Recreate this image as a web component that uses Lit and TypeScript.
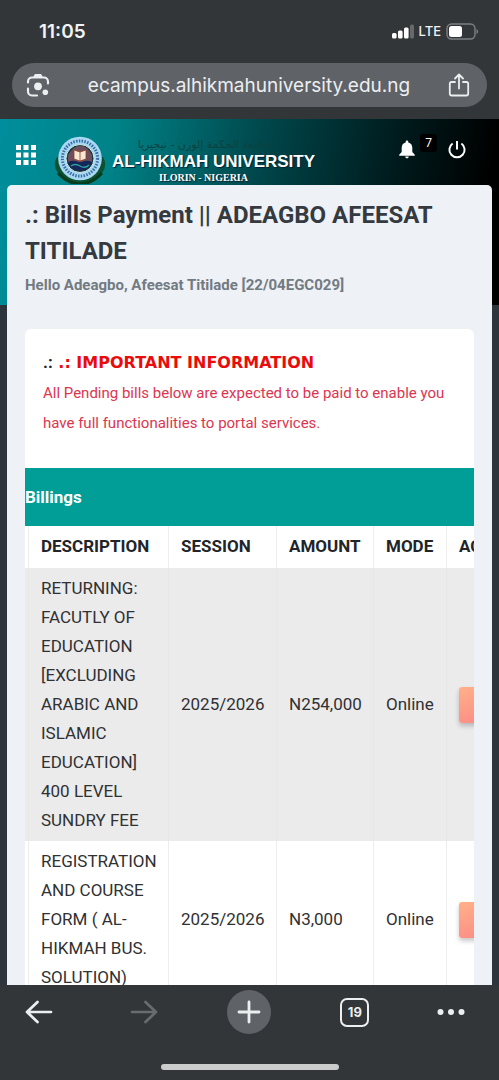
import { LitElement, html, css, svg } from "lit";
import { customElement } from "lit/decorators.js";

interface Bill {
  description: string;
  session: string;
  amount: string;
  mode: string;
}

const BILLS: Bill[] = [
  {
    description: "RETURNING: FACUTLY OF EDUCATION [EXCLUDING ARABIC AND ISLAMIC EDUCATION] 400 LEVEL SUNDRY FEE",
    session: "2025/2026",
    amount: "N254,000",
    mode: "Online",
  },
  {
    description: "REGISTRATION AND COURSE FORM ( AL-HIKMAH BUS. SOLUTION)",
    session: "2025/2026",
    amount: "N3,000",
    mode: "Online",
  },
];

@customElement("browser-top")
class BrowserTop extends LitElement {
  static styles = css`
    :host {
      display: block;
      flex: none;
      background: #333638;
      color: #f1f3f4;
      font-family: Inter, sans-serif;
    }
    .status {
      display: flex;
      align-items: center;
      height: 62px;
      padding: 0 20px 0 39px;
      box-sizing: border-box;
    }
    .time {
      flex: 1;
      font-size: 19px;
      font-weight: 600;
    }
    .signal,
    .battery {
      display: block;
    }
    .lte {
      margin: 0 5px;
      font-size: 13px;
      font-weight: 500;
    }
    .bar {
      display: flex;
      align-items: center;
      height: 44px;
      margin: 1px 12px 12px;
      padding: 0 14px;
      border-radius: 22px;
      background: #5f6267;
    }
    .icon {
      display: block;
      flex: none;
      padding: 0;
      border: 0;
      background: none;
      color: #eceef0;
    }
    .icon svg {
      display: block;
    }
    .share {
      margin-right: 3px;
    }
    .url {
      flex: 1;
      min-width: 0;
      padding: 0;
      border: 0;
      outline: 0;
      background: none;
      color: #eceef0;
      text-align: center;
      font-family: Inter, sans-serif;
      font-size: 19px;
    }
  `;

  render() {
    return html`
      <div class="status">
        <span class="time">11:05</span>
        <svg class="signal" width="22" height="15" viewBox="0 0 22 15" fill="#fff">
          <rect x="0" y="9" width="4.600" height="5.500" rx="1.500" />
          <rect x="6" y="6.500" width="4.600" height="8" rx="1.500" />
          <rect x="12" y="3.500" width="4.600" height="11" rx="1.500" />
          <rect x="18" y="0.500" width="4" height="14" rx="1.500" opacity=".25" />
        </svg>
        <span class="lte">LTE</span>
        <svg class="battery" width="33" height="17" viewBox="0 0 33 17">
          <rect x="1" y="1" width="28" height="15" rx="4.5" fill="none" stroke="#7d8082" stroke-width="1.4" />
          <rect x="3" y="3" width="13" height="11" rx="2.5" fill="#fff" />
          <path d="M30.5 6v5c1-.4 1.6-1.300 1.600-2.500s-.6-2.100-1.600-2.500z" fill="#7d8082" />
        </svg>
      </div>
      <div class="bar">
        <button class="icon" aria-label="Search with camera">
          <svg width="24" height="24" viewBox="0 0 24 24" fill="none" stroke="currentColor" stroke-width="2.200" stroke-linecap="round">
            <path d="M2 9.500V8.500A4 4 0 0 1 6 4.500H18A4 4 0 0 1 22 8.500V10.500" />
            <path d="M2 15.500V18.500A4 4 0 0 0 6 22.500H11" />
            <path d="M7 4.500 8.500 1.600Q8.800 1 9.500 1H14.500Q15.200 1 15.500 1.600L17 4.500z" fill="currentColor" stroke="none" />
            <circle cx="12" cy="13.300" r="3.900" fill="currentColor" stroke="none" />
            <circle cx="19.300" cy="19.300" r="2.800" fill="currentColor" stroke="none" />
          </svg>
        </button>
        <input class="url" aria-label="Address" value="ecampus.alhikmahuniversity.edu.ng" />
        <button class="icon share" aria-label="Share">
          <svg width="22" height="24" viewBox="0 0 22 24" fill="none" stroke="currentColor" stroke-width="1.800" stroke-linecap="round" stroke-linejoin="round">
            <path d="M7 9H3.500A1.700 1.700 0 0 0 1.800 10.700V20.800A1.700 1.700 0 0 0 3.500 22.500H18.500A1.700 1.700 0 0 0 20.200 20.800V10.700A1.700 1.700 0 0 0 18.500 9H15" />
            <path d="M11 15.500V2M7 5.500 11 1.500 15 5.500" />
          </svg>
        </button>
      </div>
    `;
  }
}

@customElement("site-header")
class SiteHeader extends LitElement {
  static styles = css`
    :host {
      display: flex;
      align-items: flex-start;
      padding: 8px 33px 0 16px;
      height: 58px;
      color: #fff;
    }
    .icon {
      display: block;
      flex: none;
      padding: 0;
      border: 0;
      background: none;
      color: #fff;
    }
    .icon svg,
    .crest {
      display: block;
    }
    .menu {
      margin-top: 18px;
    }
    .brand {
      display: flex;
      flex: 1;
      margin-left: 16px;
      color: #fff;
      text-decoration: none;
    }
    .words {
      display: flex;
      flex-direction: column;
      align-items: center;
      margin-left: 2px;
      white-space: nowrap;
    }
    .arabic,
    .place {
      padding-right: 20px;
    }
    .arabic {
      height: 26px;
      color: #0b4340;
      font-family: "DejaVu Sans", sans-serif;
      font-size: 11px;
      line-height: 36px;
    }
    .name {
      font-family: "Liberation Sans", sans-serif;
      font-size: 17px;
      font-weight: 700;
      line-height: 18px;
      text-shadow: 1px 1px 1px #023;
    }
    .place {
      font-family: "Liberation Serif", serif;
      font-size: 10px;
      font-weight: 700;
      line-height: 14px;
      text-shadow: 1px 1px 1px #023;
    }
    .bell {
      margin-top: 13px;
    }
    .badge {
      margin: 7px 11px 0 5px;
      padding: 0 5px;
      border-radius: 3px;
      background: #000;
      font-family: Roboto, sans-serif;
      font-size: 12px;
      line-height: 18px;
    }
    .power {
      margin-top: 13px;
    }
  `;

  private crest() {
    return svg`
      <path d="M9 22Q4 30 10 38Q18 49 32 50Q46 49 54 38Q60 30 55 22z" fill="#0b5132" />
      <path d="M10 38Q20 49 32 49Q44 49 54 38" fill="none" stroke="#063d1f" stroke-width="3" />
      <circle cx="32" cy="23.500" r="21.800" fill="#a9d8f2" />
      <circle cx="32" cy="23.500" r="17.600" fill="none" stroke="#3a6da6" stroke-width="3" stroke-dasharray="1.500 1.300" />
      <circle cx="32" cy="23.500" r="14" fill="#18343f" stroke="#d5efe8" stroke-width="1" />
      <path d="M20 20Q26 10 32 11Q39 10 44 20V27H20z" fill="#6b4f5c" />
      <path d="M26 15 32 17 38 15V24L32 26 26 24z" fill="#f6ead4" stroke="#9b3d2c" stroke-width=".8" />
      <path d="M32 17V26" stroke="#9b3d2c" stroke-width=".8" />
      <path d="M20 27Q26 24 32 28Q38 24 44 27Q42 35 32 36Q22 35 20 27z" fill="#15275a" />
      <path d="M23 31Q27 28 32 31T41 30" fill="none" stroke="#2fa5a0" stroke-width="1.400" />
    `;
  }

  render() {
    return html`
      <button class="icon menu" aria-label="Menu">
        <svg width="20" height="20" viewBox="0 0 20 20" fill="currentColor">
          ${[0, 7.5, 15].map((y) => [0, 7.5, 15].map((x) => svg`<rect x=${x} y=${y} width="5" height="5" />`))}
        </svg>
      </button>
      <a class="brand" href="#" aria-label="Al-Hikmah University home">
        <svg class="crest" width="58" height="57" viewBox="4 -8 58 57">${this.crest()}</svg>
        <span class="words">
          <span class="arabic" lang="ar">جامعة الحكمة إلورن - نيجيريا</span>
          <span class="name">AL-HIKMAH UNIVERSITY</span>
          <span class="place">ILORIN - NIGERIA</span>
        </span>
      </a>
      <button class="icon bell" aria-label="Notifications">
        <svg width="16" height="19" viewBox="0 0 16 19" fill="currentColor">
          <path d="M8 .4C8.800.4 9.300 1 9.300 1.700V2.400C11.900 3 13.300 5 13.300 7.700V12L15.800 14.800V15.700H.2V14.800L2.700 12V7.700C2.700 5 4.100 3 6.700 2.400V1.700C6.700 1 7.200.4 8 .4zM6.200 16.600H9.800A1.800 1.800 0 0 1 6.200 16.600z" />
        </svg>
      </button>
      <span class="badge">7</span>
      <button class="icon power" aria-label="Log out">
        <svg width="18" height="19" viewBox="0 0 18 19" fill="none" stroke="currentColor" stroke-width="2">
          <path d="M9 1V9.500M4.600 3.500A7.600 7.600 0 1 0 13.400 3.500" />
        </svg>
      </button>
    `;
  }
}

@customElement("bills-table")
class BillsTable extends LitElement {
  static styles = css`
    :host {
      display: block;
      overflow: hidden;
      color: #2f3133;
      font-family: Roboto, sans-serif;
      font-size: 17px;
      line-height: 29px;
    }
    .bills {
      width: 540px;
      border-collapse: separate;
      border-spacing: 0;
      table-layout: fixed;
    }
    .edge { width: 3px; }
    .description { width: 140px; }
    .session { width: 108px; }
    .amount { width: 97px; }
    .mode { width: 73px; }
    .head,
    .cell {
      padding: 6px 12px;
      border-left: 1px solid #ededee;
      text-align: left;
      vertical-align: middle;
      white-space: nowrap;
    }
    .head {
      padding-bottom: 7px;
      color: #212529;
      font-weight: 700;
    }
    .wrap {
      padding-right: 10px;
      white-space: normal;
    }
    .blank {
      padding: 0;
      border: 0;
    }
    .row:nth-child(odd) {
      background: #ebebeb;
    }
    .row:nth-child(odd) .cell {
      border-color: #e6e7e7;
    }
    .pay {
      display: block;
      width: 90px;
      height: 36px;
      padding: 0;
      border: 0;
      border-radius: 3px;
      background: linear-gradient(165deg, #ffb088, #fb7f86);
      box-shadow: 0 3px 5px rgb(0 0 0 / 22%);
    }
  `;

  render() {
    return html`
      <table class="bills">
        <colgroup>
          <col class="edge" /><col class="description" /><col class="session" />
          <col class="amount" /><col class="mode" /><col />
        </colgroup>
        <thead>
          <tr>
            <td class="blank"></td>
            ${["DESCRIPTION", "SESSION", "AMOUNT", "MODE", "ACTION"].map(
              (title) => html`<th class="head" scope="col">${title}</th>`,
            )}
          </tr>
        </thead>
        <tbody>
          ${BILLS.map(
            (bill) => html`
              <tr class="row">
                <td class="blank"></td>
                <td class="cell wrap">${bill.description}</td>
                <td class="cell">${bill.session}</td>
                <td class="cell">${bill.amount}</td>
                <td class="cell">${bill.mode}</td>
                <td class="cell"><button class="pay" aria-label="Pay"></button></td>
              </tr>
            `,
          )}
        </tbody>
      </table>
    `;
  }
}

@customElement("browser-bottom")
class BrowserBottom extends LitElement {
  static styles = css`
    :host {
      display: flex;
      flex: none;
      flex-direction: column;
      align-items: center;
      gap: 30px;
      padding: 5px 0 10px;
      background: #333638;
    }
    .tools {
      display: grid;
      grid-template-columns: repeat(5, 1fr);
      justify-items: center;
      align-items: center;
      align-self: stretch;
      margin: 0 -14px;
    }
    .tool {
      display: grid;
      place-items: center;
      padding: 0;
      border: 0;
      background: none;
      color: #eceef0;
    }
    .tool[disabled] {
      color: #696c6e;
    }
    .add {
      width: 44px;
      height: 44px;
      border-radius: 50%;
      background: #5f6267;
    }
    .tabs {
      width: 29px;
      height: 29px;
      box-sizing: border-box;
      border: 2px solid currentColor;
      border-radius: 7px;
      font-family: Inter, sans-serif;
      font-size: 13px;
      font-weight: 700;
    }
    .more {
      margin-right: 18px;
    }
    .grip {
      width: 178px;
      height: 6px;
      border-radius: 3px;
      background: #cbcccc;
    }
  `;

  render() {
    return html`
      <nav class="tools">
        <button class="tool" aria-label="Back">
          <svg width="28" height="24" viewBox="0 0 28 24" fill="none" stroke="currentColor" stroke-width="2.700" stroke-linecap="round" stroke-linejoin="round">
            <path d="M26 12H2M12.500 2 2 12 12.500 22" />
          </svg>
        </button>
        <button class="tool" aria-label="Forward" disabled>
          <svg width="28" height="24" viewBox="0 0 28 24" fill="none" stroke="currentColor" stroke-width="2.700" stroke-linecap="round" stroke-linejoin="round">
            <path d="M2 12H26M15.500 2 26 12 15.500 22" />
          </svg>
        </button>
        <button class="tool add" aria-label="New tab">
          <svg width="24" height="24" viewBox="0 0 24 24" fill="none" stroke="currentColor" stroke-width="2.800" stroke-linecap="round">
            <path d="M12 2V22M2 12H22" />
          </svg>
        </button>
        <button class="tool tabs" aria-label="19 open tabs">19</button>
        <button class="tool more" aria-label="More">
          <svg width="28" height="8" viewBox="0 0 28 8" fill="currentColor">
            <circle cx="3.500" cy="4" r="3" /><circle cx="14" cy="4" r="3" /><circle cx="24.500" cy="4" r="3" />
          </svg>
        </button>
      </nav>
      <div class="grip"></div>
    `;
  }
}

@customElement("app-root")
class AppRoot extends LitElement {
  static styles = css`
    :host {
      display: flex;
      flex-direction: column;
      height: 100vh;
      overflow: hidden;
      font-family: Roboto, sans-serif;
    }
    .page {
      flex: 1;
      min-height: 0;
      overflow: hidden;
      background: linear-gradient(100deg, #008e9c 0%, #008388 22%, #00474b 50%, #001c1e 75%, #000 94%) top / 100% 186px no-repeat #2d343c;
    }
    .sheet {
      margin: 0 7px;
      padding: 12px 18px 0;
      border-radius: 5px 5px 0 0;
      background: #eef1f5;
    }
    .title {
      margin: 0;
      color: #343a40;
      font-size: 24px;
      font-weight: 700;
      line-height: 36px;
    }
    .hello {
      margin: 4px 0 32px;
      color: #727a82;
      font-size: 15px;
      font-weight: 700;
      line-height: 24px;
    }
    .card {
      overflow: hidden;
      border-radius: 6px 6px 0 0;
      background: #fff;
    }
    .notice {
      padding: 18px 18px 30px;
    }
    .heading {
      margin: 0;
      color: #212529;
      font-family: "DejaVu Sans", sans-serif;
      font-size: 16px;
      font-weight: 700;
      line-height: 30px;
    }
    .dots {
      font-family: Roboto, sans-serif;
      font-size: 17px;
    }
    .alert {
      color: #ea0c0c;
    }
    .text {
      margin: 0;
      color: #dc3550;
      font-size: 15px;
      line-height: 30px;
    }
    .billings {
      margin: 0;
      background: #009e96;
      color: #fff;
      font-size: 17px;
      font-weight: 700;
      line-height: 58px;
    }
  `;

  render() {
    return html`
      <browser-top></browser-top>
      <main class="page">
        <site-header></site-header>
        <section class="sheet">
          <h1 class="title">.: Bills Payment || ADEAGBO AFEESAT TITILADE</h1>
          <p class="hello">Hello Adeagbo, Afeesat Titilade [22/04EGC029]</p>
          <div class="card">
            <div class="notice">
              <h2 class="heading"><span class="dots">.:</span> <span class="alert">.: IMPORTANT INFORMATION</span></h2>
              <p class="text">All Pending bills below are expected to be paid to enable you have full functionalities to portal services.</p>
            </div>
            <h3 class="billings">Billings</h3>
            <bills-table></bills-table>
          </div>
        </section>
      </main>
      <browser-bottom></browser-bottom>
    `;
  }
}
